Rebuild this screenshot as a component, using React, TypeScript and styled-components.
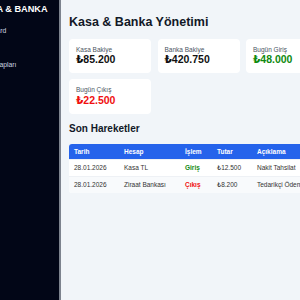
import React from "react";
import styled, { createGlobalStyle } from "styled-components";

const Global = createGlobalStyle`
  html, body { margin: 0; padding: 0; }
  body {
    background: #f1f5f9;
    font-family: "Liberation Sans", Arial, "DejaVu Sans", sans-serif;
    overflow: hidden;
  }
`;

const Shell = styled.div`
  display: flex;
  min-height: 100vh;
  width: max-content;
`;

const Sidebar = styled.aside`
  flex: none;
  width: 59px;
  background: #020617;
  border-right: 2px solid #7d838e;
  display: flex;
  justify-content: flex-end;
  overflow: hidden;
`;

const SideInner = styled.div`
  flex: none;
  width: 86px;
  padding-top: 4px;
  display: flex;
  flex-direction: column;
`;

const Brand = styled.div`
  color: #ffffff;
  font-weight: 700;
  font-size: 9.2px;
  line-height: 11px;
  white-space: nowrap;
  padding-left: 4px;
  margin-bottom: 7.5px;
`;

const NavItem = styled.div`
  color: #cbd5e1;
  font-size: 6.8px;
  line-height: 8px;
  padding: 4.5px 0;
  white-space: nowrap;
`;

const Main = styled.main`
  flex: none;
  padding: 15px 20px 20px 8px;
`;

const Title = styled.h1`
  margin: 0 0 9px;
  font-size: 12.5px;
  line-height: 14.5px;
  font-weight: 700;
  color: #111827;
`;

const Cards = styled.div`
  display: grid;
  grid-template-columns: repeat(3, 82px);
  gap: 6px 6.5px;
`;

const Card = styled.div`
  background: #ffffff;
  border-radius: 4px;
  padding: 7px 7px 8px;
`;

const CardLabel = styled.div`
  font-size: 6.5px;
  line-height: 7.5px;
  color: #4b5563;
`;

const CardValue = styled.div<{ $tone?: "green" | "red" }>`
  font-size: 10.5px;
  line-height: 12px;
  font-weight: 700;
  color: ${(p) => (p.$tone === "green" ? "#0f8a0f" : p.$tone === "red" ? "#f01010" : "#111111")};
`;

const Section = styled.h2`
  margin: 9.5px 0 9px;
  font-size: 10px;
  line-height: 11.5px;
  font-weight: 700;
  color: #111827;
`;

const Table = styled.table`
  width: 259px;
  border-collapse: separate;
  border-spacing: 0;
  background: #ffffff;
  border-radius: 3px;
  overflow: hidden;
  table-layout: fixed;
`;

const Th = styled.th`
  background: #2563eb;
  color: #ffffff;
  font-size: 6.5px;
  font-weight: 700;
  text-align: left;
  height: 15px;
  padding: 0 0 0 5px;
  white-space: nowrap;
`;

const Tr = styled.tr<{ $alt?: boolean }>`
  background: ${(p) => (p.$alt ? "#f8fafc" : "#ffffff")};
`;

const Td = styled.td<{ $tone?: "green" | "red" }>`
  font-size: 6.5px;
  height: 16px;
  padding: 0 0 0 5px;
  white-space: nowrap;
  overflow: hidden;
  color: ${(p) => (p.$tone === "green" ? "#138a13" : p.$tone === "red" ? "#f01010" : "#333333")};
  font-weight: ${(p) => (p.$tone ? 700 : 400)};
  border-top: 1px solid #eef1f5;
`;

const cards = [
  { label: "Kasa Bakiye", value: "₺85.200" },
  { label: "Banka Bakiye", value: "₺420.750" },
  { label: "Bugün Giriş", value: "₺48.000", tone: "green" as const },
  { label: "Bugün Çıkış", value: "₺22.500", tone: "red" as const },
];

const rows = [
  { date: "28.01.2026", acc: "Kasa TL", op: "Giriş", tone: "green" as const, amt: "₺12.500", desc: "Nakit Tahsilat" },
  { date: "28.01.2026", acc: "Ziraat Bankası", op: "Çıkış", tone: "red" as const, amt: "₺8.200", desc: "Tedarikçi Ödemesi" },
];

export default function App() {
  return (
    <>
      <Global />
      <Shell>
        <Sidebar>
          <SideInner>
            <Brand>KASA &amp; BANKA</Brand>
            <NavItem>Dashboard</NavItem>
            <NavItem>Kasa</NavItem>
            <NavItem>Cari Hesapları</NavItem>
            <NavItem>Raporlar</NavItem>
          </SideInner>
        </Sidebar>
        <Main>
          <Title>Kasa &amp; Banka Yönetimi</Title>
          <Cards>
            {cards.map((c) => (
              <Card key={c.label}>
                <CardLabel>{c.label}</CardLabel>
                <CardValue $tone={c.tone}>{c.value}</CardValue>
              </Card>
            ))}
          </Cards>
          <Section>Son Hareketler</Section>
          <Table>
            <colgroup>
              <col style={{ width: 50 }} />
              <col style={{ width: 61 }} />
              <col style={{ width: 32 }} />
              <col style={{ width: 40 }} />
              <col />
            </colgroup>
            <thead>
              <tr>
                <Th>Tarih</Th>
                <Th>Hesap</Th>
                <Th>İşlem</Th>
                <Th>Tutar</Th>
                <Th>Açıklama</Th>
              </tr>
            </thead>
            <tbody>
              {rows.map((r, i) => (
                <Tr key={i} $alt={i % 2 === 1}>
                  <Td>{r.date}</Td>
                  <Td>{r.acc}</Td>
                  <Td $tone={r.tone}>{r.op}</Td>
                  <Td>{r.amt}</Td>
                  <Td>{r.desc}</Td>
                </Tr>
              ))}
            </tbody>
          </Table>
        </Main>
      </Shell>
    </>
  );
}
